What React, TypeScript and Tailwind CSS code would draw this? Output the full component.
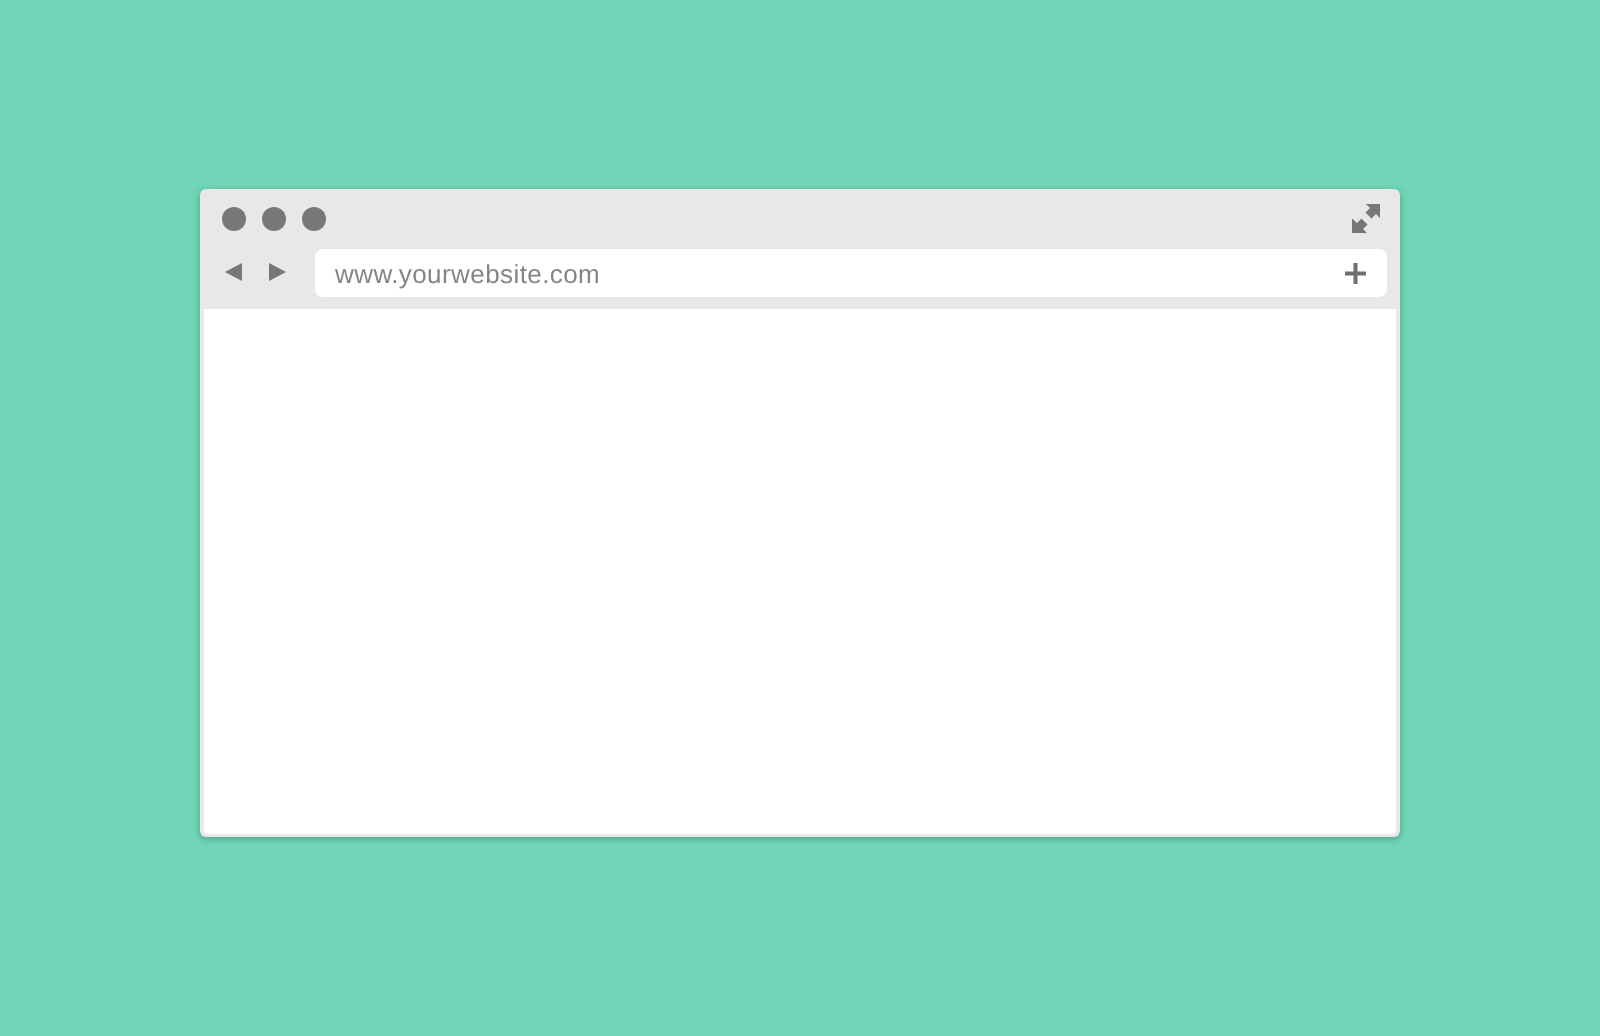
export default function App() {
  return (
    <div className="h-[1036px] w-full overflow-hidden bg-[#72d5b7] pt-[189px] font-['Liberation_Sans',sans-serif]">
      <div className="mx-auto flex h-[648px] w-[1200px] flex-col rounded-[6px] bg-[#e8e8e8] px-1 pb-[3px] shadow-[0_2px_6px_rgba(40,110,90,0.5)]">
        <div className="-mx-1 flex h-[60px] items-center justify-between pl-[21px] pr-[19px]">
          <div className="flex gap-4 pl-[0.5px] blur-[0.4px]">
            <div className="h-6 w-6 rounded-full bg-[#777777]" />
            <div className="h-6 w-6 rounded-full bg-[#777777]" />
            <div className="h-6 w-6 rounded-full bg-[#777777]" />
          </div>
          <svg className="mb-[1px] blur-[0.4px]" width="30" height="30" viewBox="0 0 30 30" fill="#777777">
            <path d="M29 0H15l4 4-4.5 4.5 6 6L25 10l4 4z" />
            <path d="M1 29h15l-4-4 4.5-4.5-6-6L6 19l-5-4.5z" />
          </svg>
        </div>
        <div className="-mx-1 flex h-[48px] items-center pl-[25px] pr-[13px]">
          <div className="flex w-[90px] shrink-0 items-center gap-[27px] pb-[2px] blur-[0.4px]">
            <svg width="17" height="18" viewBox="0 0 17 18" fill="#777777"><path d="M17 0v18L0 9z" /></svg>
            <svg width="17" height="18" viewBox="0 0 17 18" fill="#777777"><path d="M0 0v18l17-9z" /></svg>
          </div>
          <div className="flex h-12 flex-1 items-center justify-between rounded-[8px] bg-white pl-5 pr-[21px]">
            <span className="pt-[1px] text-[26px] leading-none tracking-[0.42px] text-[#858585] blur-[0.4px] [text-rendering:geometricPrecision]">www.yourwebsite.com</span>
            <svg className="blur-[0.3px]" width="21" height="21" viewBox="0 0 21 21" fill="#6f6f6f"><path d="M8.5 0h4v8.5H21v4h-8.5V21h-4v-8.5H0v-4h8.5z" /></svg>
          </div>
        </div>
        <div className="mt-3 flex-1 rounded-b-[3px] bg-white" />
      </div>
    </div>
  );
}
